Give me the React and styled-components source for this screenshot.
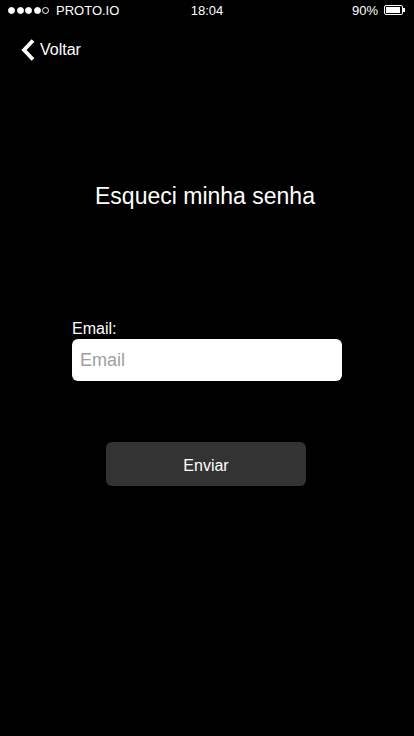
import React, { useState } from 'react';
import styled, { createGlobalStyle } from 'styled-components';

const GlobalStyle = createGlobalStyle`
    html, body {
        margin: 0;
        padding: 0;
        background: #000000;
    }
    body {
        font-family: "Liberation Sans", Arial, sans-serif;
    }
    * {
        box-sizing: border-box;
    }
`;

function App() {
    const [email, setEmail] = useState('');

    return (
        <Screen>
            <GlobalStyle />
            <StatusBar>
                <Carrier>
                    <Dots>
                        <Dot filled />
                        <Dot filled />
                        <Dot filled />
                        <Dot filled />
                        <Dot />
                    </Dots>
                    PROTO.IO
                </Carrier>
                <Clock>18:04</Clock>
                <Battery>
                    90%
                    <BatteryBody>
                        <BatteryLevel />
                    </BatteryBody>
                    <BatteryTip />
                </Battery>
            </StatusBar>

            <NavBar>
                <BackButton>
                    <svg width="14" height="22" viewBox="0 0 14 22">
                        <path d="M12 1.5 L3 11 L12 20.5" fill="none" stroke="#ffffff" strokeWidth="3.8" strokeLinecap="butt" strokeLinejoin="miter" />
                    </svg>
                    Voltar
                </BackButton>
            </NavBar>

            <Title>Esqueci minha senha</Title>

            <Form>
                <Label htmlFor="email">Email:</Label>
                <Input
                    id="email"
                    type="text"
                    placeholder="Email"
                    value={email}
                    onChange={(e) => setEmail(e.target.value)}
                />
            </Form>

            <Submit>Enviar</Submit>
        </Screen>
    );
}

export default App;

const Screen = styled.div`
    width: 414px;
    height: 736px;
    background: #000000;
    color: #ffffff;
    display: flex;
    flex-direction: column;
    align-items: center;
    overflow: hidden;
`;

const StatusBar = styled.div`
    width: 100%;
    height: 20px;
    display: grid;
    grid-template-columns: 1fr auto 1fr;
    align-items: center;
    padding: 0 9px 0 8px;
    font-size: 13px;
    color: #ffffff;
`;

const Carrier = styled.div`
    display: flex;
    align-items: center;
    gap: 7px;
`;

const Dots = styled.div`
    display: flex;
    gap: 1.5px;
`;

const Dot = styled.span`
    width: 7px;
    height: 7px;
    border-radius: 50%;
    border: 1px solid #ffffff;
    background: ${(p) => (p.filled ? '#ffffff' : 'transparent')};
`;

const Clock = styled.div`
    text-align: center;
    padding-left: 1px;
`;

const Battery = styled.div`
    display: flex;
    align-items: center;
    justify-content: flex-end;
`;

const BatteryBody = styled.span`
    margin-left: 6px;
    width: 19px;
    height: 10px;
    border: 1px solid #ffffff;
    border-radius: 2px;
    padding: 1px;
    display: flex;
`;

const BatteryLevel = styled.span`
    width: 90%;
    height: 100%;
    background: #ffffff;
`;

const BatteryTip = styled.span`
    width: 2px;
    height: 4px;
    background: #ffffff;
`;

const NavBar = styled.div`
    width: 100%;
    height: 58px;
    padding-top: 2px;
    display: flex;
    align-items: center;
    padding-left: 21px;
`;

const BackButton = styled.div`
    display: flex;
    align-items: center;
    gap: 5px;
    font-size: 16px;
    color: #ffffff;
    cursor: pointer;
`;

const Title = styled.h1`
    margin: 104px 4px 0 0;
    font-size: 23px;
    font-weight: 400;
    line-height: 28px;
    color: #ffffff;
`;

const Form = styled.div`
    margin-top: 108px;
    width: 270px;
    display: flex;
    flex-direction: column;
`;

const Label = styled.label`
    font-size: 16px;
    line-height: 20px;
    padding-top: 1px;
    color: #ffffff;
`;

const Input = styled.input`
    width: 100%;
    height: 42px;
    border: none;
    border-radius: 6px;
    background: #ffffff;
    padding: 0 8px;
    font-family: "Liberation Sans", Arial, sans-serif;
    font-size: 18px;
    color: #000000;
    outline: none;

    &::placeholder {
        color: #a0a0a0;
    }
`;

const Submit = styled.div`
    margin: 61px 2px 0 0;
    width: 200px;
    height: 44px;
    padding-top: 3px;
    border-radius: 6px;
    background: #333333;
    color: #ffffff;
    font-size: 16px;
    display: flex;
    justify-content: center;
    align-items: center;
    cursor: pointer;
`;
